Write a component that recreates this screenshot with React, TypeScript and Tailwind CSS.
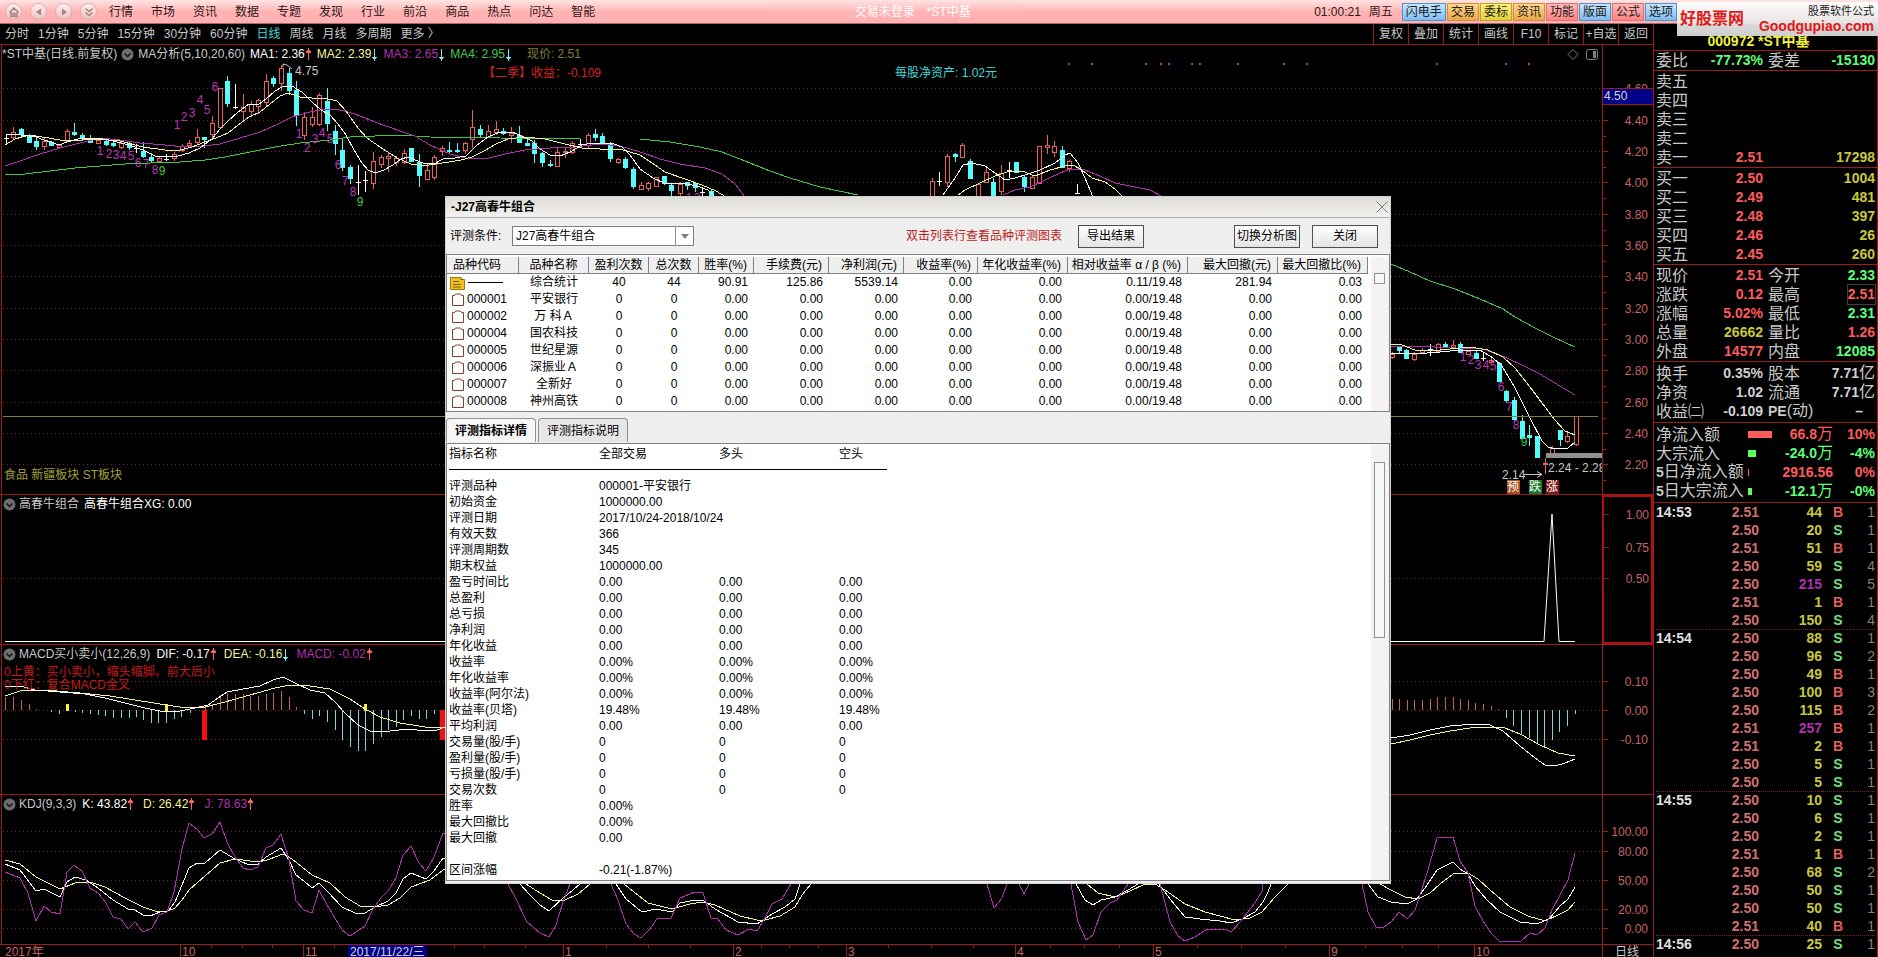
import type { ReactNode } from "react";

type Candle = [x: number, high: number, top: number, bottom: number, low: number, kind: "u" | "d" | "w"];
type Level = [label: string, y: number];

const MENU = ["行情", "市场", "资讯", "数据", "专题", "发现", "行业", "前沿", "商品", "热点", "问达", "智能"];
const PERIODS = ["分时", "1分钟", "5分钟", "15分钟", "30分钟", "60分钟", "日线", "周线", "月线", "多周期", "更多 〉"];
const TOOLS = ["复权", "叠加", "统计", "画线", "F10", "标记", "+自选", "返回"];

const BLUE = "border-[#4f94cc] from-[#c4e6ff] to-[#7dbcf0]";
const ORANGE = "border-[#d09040] from-[#ffd98a] to-[#e8a848]";
const YELLOW = "border-[#b8a820] from-[#fff27a] to-[#e0d030]";
const RED = "border-[#e07070] from-[#ffb8b8] to-[#ff8484]";
const SHORTCUTS = [
  { label: "闪电手", tone: BLUE },
  { label: "交易", tone: ORANGE },
  { label: "委标", tone: YELLOW },
  { label: "资讯", tone: ORANGE },
  { label: "功能", tone: RED },
  { label: "版面", tone: BLUE },
  { label: "公式", tone: RED },
  { label: "选项", tone: BLUE },
];

const CANDLES: Candle[] = [
  [6, 134, 138, 138, 143, "w"], [13, 127, 132, 137, 140, "u"], [21, 128, 129, 134, 137, "d"], [29, 134, 135, 142, 142, "d"],
  [36, 138, 141, 146, 150, "d"], [44, 138, 141, 146, 150, "u"], [51, 141, 142, 145, 145, "d"], [59, 144, 145, 147, 147, "u"],
  [67, 129, 131, 141, 142, "u"], [74, 123, 132, 134, 136, "d"], [82, 133, 135, 137, 141, "d"], [90, 135, 139, 142, 143, "d"],
  [98, 138, 140, 143, 144, "u"], [106, 139, 141, 144, 146, "d"], [113, 140, 143, 145, 147, "d"], [121, 142, 143, 147, 149, "u"],
  [129, 142, 143, 147, 150, "d"], [136, 144, 148, 148, 153, "w"], [143, 142, 151, 156, 158, "d"], [151, 153, 157, 160, 162, "d"],
  [159, 156, 158, 161, 163, "u"], [166, 154, 159, 159, 161, "w"], [174, 152, 154, 158, 161, "u"], [182, 144, 146, 150, 152, "u"],
  [189, 140, 143, 145, 146, "u"], [197, 129, 137, 142, 144, "u"], [204, 137, 137, 139, 148, "d"], [212, 116, 123, 134, 138, "u"],
  [220, 88, 88, 127, 129, "u"], [227, 76, 81, 103, 107, "d"], [235, 84, 107, 107, 109, "w"], [243, 94, 107, 111, 120, "u"],
  [251, 101, 104, 111, 117, "u"], [258, 99, 100, 106, 114, "u"], [266, 74, 81, 102, 107, "u"], [273, 76, 78, 83, 87, "d"],
  [281, 65, 68, 83, 91, "u"], [289, 68, 73, 90, 95, "d"], [296, 81, 90, 115, 126, "d"], [304, 112, 117, 135, 140, "u"],
  [312, 107, 117, 124, 127, "u"], [319, 93, 95, 124, 126, "u"], [327, 88, 101, 123, 131, "d"], [335, 125, 131, 143, 155, "d"],
  [342, 139, 150, 167, 171, "d"], [350, 165, 167, 178, 184, "d"], [358, 165, 182, 182, 195, "w"], [365, 171, 180, 180, 192, "w"],
  [373, 152, 161, 183, 189, "u"], [381, 155, 157, 164, 168, "u"], [388, 152, 156, 158, 172, "u"], [396, 156, 158, 162, 166, "u"],
  [404, 149, 153, 162, 164, "u"], [411, 148, 148, 161, 161, "d"], [419, 154, 162, 175, 187, "d"], [427, 163, 170, 179, 180, "u"],
  [434, 155, 157, 177, 180, "u"], [442, 146, 148, 151, 156, "u"], [449, 142, 150, 151, 153, "d"], [457, 143, 150, 151, 153, "d"],
  [465, 142, 143, 150, 154, "u"], [472, 110, 127, 139, 148, "u"], [480, 125, 129, 134, 137, "d"], [488, 125, 131, 137, 138, "u"],
  [496, 121, 129, 132, 135, "u"], [503, 128, 131, 133, 135, "d"], [511, 127, 133, 135, 143, "u"], [519, 126, 135, 142, 143, "d"],
  [527, 138, 143, 145, 146, "d"], [534, 140, 143, 153, 163, "d"], [542, 152, 153, 162, 167, "d"], [550, 160, 164, 165, 167, "d"],
  [557, 147, 152, 166, 167, "u"], [565, 147, 151, 152, 158, "u"], [572, 141, 143, 152, 154, "u"], [580, 139, 144, 144, 147, "w"],
  [588, 133, 135, 145, 148, "u"], [595, 129, 134, 137, 141, "d"], [602, 133, 136, 143, 144, "d"], [610, 142, 143, 158, 162, "d"],
  [618, 158, 159, 162, 164, "u"], [625, 157, 159, 167, 169, "d"], [633, 167, 169, 186, 189, "d"], [641, 182, 185, 189, 190, "u"],
  [648, 182, 183, 188, 191, "u"], [656, 177, 177, 186, 187, "u"], [664, 176, 176, 183, 185, "d"], [671, 183, 185, 190, 197, "d"],
  [680, 182, 184, 193, 196, "u"], [687, 182, 182, 185, 190, "d"], [695, 182, 183, 187, 192, "d"], [702, 187, 192, 192, 197, "w"],
  [711, 190, 191, 198, 198, "d"], [932, 178, 181, 198, 198, "u"], [939, 172, 181, 181, 186, "w"], [947, 154, 156, 182, 187, "u"],
  [955, 153, 154, 156, 162, "d"], [962, 143, 145, 157, 158, "u"], [970, 159, 161, 178, 178, "d"], [978, 183, 184, 198, 198, "u"],
  [986, 168, 172, 182, 183, "u"], [993, 178, 182, 195, 197, "d"], [1001, 165, 173, 191, 195, "u"], [1009, 162, 170, 170, 178, "w"],
  [1016, 162, 162, 172, 172, "d"], [1024, 176, 177, 186, 192, "d"], [1032, 175, 177, 188, 189, "u"], [1039, 146, 146, 183, 183, "u"],
  [1047, 135, 145, 147, 154, "u"], [1054, 141, 146, 152, 157, "u"], [1062, 146, 150, 167, 168, "d"], [1069, 160, 161, 168, 172, "u"],
  [1077, 184, 193, 193, 194, "w"], [1392, 352, 354, 357, 359, "u"], [1399, 346, 347, 350, 353, "d"], [1406, 349, 350, 358, 359, "d"],
  [1414, 352, 354, 359, 361, "u"], [1422, 348, 350, 352, 354, "u"], [1430, 344, 349, 349, 356, "w"], [1438, 343, 344, 351, 352, "u"],
  [1445, 342, 344, 347, 348, "d"], [1453, 340, 345, 347, 349, "u"], [1460, 342, 344, 352, 353, "d"], [1468, 350, 351, 354, 355, "u"],
  [1476, 351, 353, 358, 359, "d"], [1483, 353, 358, 358, 361, "w"], [1491, 358, 360, 362, 363, "u"], [1499, 362, 363, 381, 381, "d"],
  [1506, 390, 391, 400, 403, "d"], [1514, 397, 400, 419, 421, "d"], [1522, 415, 421, 438, 439, "d"], [1529, 425, 435, 437, 446, "d"],
  [1537, 436, 436, 457, 457, "d"], [1545, 458, 463, 464, 474, "u"], [1552, 446, 448, 453, 455, "u"], [1560, 430, 430, 439, 446, "d"],
  [1567, 432, 436, 441, 443, "u"], [1576, 416, 416, 444, 446, "u"],
];

const MA_LINES = [
  { color: "#44c844", points: "5,175 25,174 50,171 75,168 100,166 125,164 150,163 180,162 205,160 225,157 250,152 275,147 300,143 330,140 350,137 375,136 400,135 430,137 500,138 580,139 640,139 670,142 700,147 722,152 745,161 770,171 790,178 820,187 858,195" },
  { color: "#44c844", points: "1391,264 1410,272 1430,281 1455,289 1480,299 1503,309 1515,317 1535,328 1555,338 1575,347" },
  { color: "#b030b0", points: "5,166 20,161 40,154 60,148 80,143 100,138 120,140 140,143 165,145 185,147 205,146 220,144 240,138 260,132 278,124 292,117 310,112 325,109 340,110 355,114 375,122 400,131 415,136 430,145 450,154 465,158 485,159 505,154 525,150 550,148 575,147 600,144 620,146 640,152 660,159 680,164 705,168 722,174 735,184 745,197" },
  { color: "#b030b0", points: "1003,195 1015,190 1030,187 1045,180 1060,173 1070,169 1085,170 1100,176 1115,183 1135,187 1150,190 1163,197" },
  { color: "#b030b0", points: "1391,347 1420,346 1450,348 1480,348 1500,355 1520,364 1540,374 1560,386 1575,395" },
  { color: "#f4f49a", points: "5,145 15,139 29,135 49,138 65,141 82,140 98,139 120,141 143,147 165,150 180,150 192,147 205,142 216,138 228,133 238,125 249,117 260,112 270,104 280,96 288,93 300,97 312,98 324,98 337,101 346,111 358,128 367,138 380,147 397,158 411,164 423,166 436,164 449,162 461,160 472,157 484,151 496,144 508,139 524,137 545,139 565,144 582,148 600,149 620,149 640,155 655,165 665,172 685,179 702,185 716,191 726,197" },
  { color: "#f4f49a", points: "958,195 965,190 980,183 995,176 1010,171 1022,171 1035,176 1050,170 1065,166 1073,165 1082,170 1092,178 1105,182 1115,189 1122,196" },
  { color: "#f4f49a", points: "1391,344 1402,345 1415,350 1430,351 1450,349 1470,347 1488,350 1503,357 1515,368 1530,387 1545,407 1555,420 1565,431 1575,435" },
  { color: "#ffffff", points: "6,135 13,134 21,135 29,136 36,137 44,140 51,142 59,145 67,142 74,140 82,138 98,138 113,141 129,145 143,150 155,156 167,157 178,156 189,153 200,148 212,139 220,129 228,121 238,112 249,104 258,105 266,99 275,91 284,86 292,86 302,92 312,102 321,110 330,115 338,124 346,135 354,150 362,163 368,170 375,173 384,170 393,165 401,159 408,157 415,160 423,163 434,164 443,159 455,158 466,156 476,146 488,137 500,132 512,132 522,136 532,141 540,149 550,155 560,156 570,152 582,145 592,143 605,143 614,144 622,147 630,155 640,169 653,178 664,183 682,183 697,186 708,190 715,197" },
  { color: "#ffffff", points: "943,195 955,178 963,165 972,163 985,166 995,173 1005,180 1015,178 1028,174 1040,170 1055,163 1065,155 1070,153 1078,163 1085,178 1093,197" },
  { color: "#ffffff", points: "1391,353 1415,354 1440,352 1460,350 1480,350 1493,358 1502,366 1515,388 1530,418 1542,441 1548,447 1555,449 1568,448 1575,442" },
];

// nine-turn sequence counters, [digit, x, y]
const COUNTERS: [number, number, number][] = [
  [1, 100, 151], [2, 109, 154], [3, 116, 155], [4, 123, 156], [5, 131, 156], [6, 138, 163], [7, 146, 164], [8, 155, 170], [9, 162, 171],
  [1, 177, 125], [2, 184, 117], [3, 192, 113], [4, 200, 100], [5, 207, 110], [6, 215, 87],
  [1, 299, 134], [2, 307, 148], [3, 315, 139], [4, 322, 133], [5, 330, 139], [6, 338, 165], [7, 345, 181], [8, 353, 192], [9, 360, 202],
  [1, 689, 198], [2, 697, 198],
  [1, 1463, 357], [2, 1471, 360], [3, 1478, 365], [4, 1486, 365], [5, 1493, 366], [6, 1501, 387], [7, 1509, 407], [8, 1516, 425], [9, 1524, 442],
];

const SIGNAL_DOTS = [1069, 1092, 1146, 1161, 1169, 1192, 1200, 1238, 1284, 1307, 1437, 1506, 1529];

const PRICE_LEVELS: Level[] = [
  ["4.60", 88], ["4.40", 120], ["4.20", 151], ["4.00", 182], ["3.80", 214], ["3.60", 245], ["3.40", 276],
  ["3.20", 308], ["3.00", 339], ["2.80", 370], ["2.60", 402], ["2.40", 433], ["2.20", 464],
];

// histogram, [x, end y]
const MACD_BARS: [number, number][] = [
  [5, 697], [13, 697], [21, 700], [29, 704], [36, 709], [51, 712], [59, 714], [75, 712], [82, 713], [90, 714], [98, 715],
  [105, 716], [113, 718], [121, 718], [129, 718], [136, 717], [143, 720], [151, 723], [158, 723], [166, 723], [174, 719],
  [181, 717], [190, 713], [205, 706], [212, 704], [220, 695], [227, 693], [235, 694], [243, 694], [250, 696], [258, 696],
  [266, 694], [273, 693], [281, 691], [289, 697], [296, 707], [304, 714], [312, 719], [319, 716], [327, 722], [335, 730],
  [342, 740], [350, 747], [358, 751], [365, 751], [373, 744], [381, 737], [388, 730], [396, 727], [403, 720], [411, 716],
  [419, 719], [426, 719], [434, 714], [1392, 699], [1399, 699], [1407, 700], [1414, 700], [1422, 700], [1430, 699],
  [1437, 697], [1445, 697], [1453, 697], [1460, 699], [1468, 700], [1475, 703], [1483, 704], [1491, 706], [1498, 709],
  [1506, 718], [1513, 726], [1521, 735], [1529, 738], [1537, 743], [1544, 746], [1552, 740], [1559, 732], [1567, 726], [1575, 714],
];

const MACD_LINES = [
  { color: "#f4f49a", points: "5,696 20,691 45,690 80,693 110,696 135,700 160,704 180,707 205,707 225,702 250,695 275,688 290,685 310,686 330,689 350,699 365,709 380,717 400,723 425,727 445,728" },
  { color: "#ffffff", points: "5,687 20,686 35,690 60,692 85,694 105,698 125,703 145,708 160,711 180,711 195,708 208,705 218,698 227,692 243,689 260,686 273,680 283,677 295,683 310,690 325,693 335,702 345,713 358,725 370,731 390,731 408,729 425,731 437,730 445,727" },
  { color: "#f4f49a", points: "1391,744 1410,740 1430,735 1450,731 1470,728 1490,727 1505,728 1520,734 1540,745 1558,753 1575,756" },
  { color: "#ffffff", points: "1391,738 1410,735 1430,730 1450,726 1475,724 1490,725 1503,731 1520,746 1535,758 1545,765 1555,766 1565,763 1575,759" },
];

const KDJ_LINES = [
  { color: "#f4f49a", points: "5,860 20,864 36,877 50,884 60,889 75,883 90,882 105,887 125,898 143,907 155,911 168,911 175,908 182,900 189,890 205,876 220,863 235,859 250,861 260,862 270,859 283,854 292,859 312,875 330,883 345,897 360,906 375,907 388,905 400,898 411,887 430,880 443,870 450,866" },
  { color: "#f4f49a", points: "526,884 540,893 552,900 565,900 578,894 590,884" },
  { color: "#f4f49a", points: "624,884 634,892 648,903 672,909 690,904 703,902 715,905 740,916 757,920 765,920 780,916 795,907 802,895 811,884" },
  { color: "#f4f49a", points: "1087,884 1098,893 1115,897 1130,891 1145,884 1155,884 1165,890 1185,904 1205,912 1235,920 1250,918 1262,912 1275,897 1288,884" },
  { color: "#f4f49a", points: "1380,884 1391,890 1405,897 1418,899 1430,893 1440,884 1453,874 1468,873 1478,879 1490,890 1510,907 1528,916 1545,921 1560,914 1568,910 1575,902" },
  { color: "#ffffff", points: "5,864 20,870 36,891 44,889 60,897 67,882 75,877 86,880 98,888 113,900 128,909 135,910 143,915 150,916 160,912 168,911 175,902 182,885 189,868 197,863 205,863 220,850 235,859 247,864 258,864 266,857 281,848 289,860 296,875 304,881 312,888 319,883 327,891 342,907 355,913 365,913 375,907 388,901 396,893 403,879 411,873 426,879 434,871 443,858 450,858" },
  { color: "#ffffff", points: "520,884 530,895 540,905 549,911 563,898 573,890 580,884" },
  { color: "#ffffff", points: "616,884 626,899 642,912 656,909 672,912 680,903 695,900 703,900 715,909 738,922 757,924 772,914 785,907 795,899 800,884" },
  { color: "#ffffff", points: "1076,884 1085,900 1093,905 1101,900 1115,897 1128,890 1138,884" },
  { color: "#ffffff", points: "1159,884 1170,899 1185,917 1200,919 1220,921 1231,923 1242,919 1255,912 1263,902 1268,892 1271,884" },
  { color: "#ffffff", points: "1368,884 1378,897 1391,902 1407,904 1417,899 1427,885 1437,870 1453,862 1460,869 1468,874 1475,886 1487,900 1500,912 1520,922 1537,924 1549,919 1560,906 1568,899 1575,887" },
  { color: "#b030b0", points: "5,872 20,878 28,893 36,921 44,906 51,912 60,914 67,872 74,865 82,871 90,888 98,893 106,903 113,917 121,919 128,929 135,922 143,932 152,928 159,915 167,912 174,892 182,849 189,823 197,829 204,838 212,834 220,822 227,842 235,857 243,868 250,870 258,867 266,848 273,845 281,834 289,860 296,901 304,910 312,913 319,890 327,905 335,918 342,930 350,936 365,926 373,909 381,898 388,891 396,878 403,855 411,846 419,863 426,871 434,857 443,833 450,835" },
  { color: "#b030b0", points: "508,884 515,897 527,922 540,933 549,937 556,925 563,902 570,884" },
  { color: "#b030b0", points: "611,884 618,900 626,924 634,934 641,938 649,930 657,919 671,918 680,898 695,892 703,893 711,918 718,919 726,930 738,935 749,929 757,931 765,918 772,904 782,899 791,884" },
  { color: "#b030b0", points: "987,884 994,908 1002,898 1007,884" },
  { color: "#b030b0", points: "1019,884 1024,894 1029,884" },
  { color: "#b030b0", points: "1071,884 1078,922 1086,940 1093,935 1101,912 1110,903 1117,900 1128,884" },
  { color: "#b030b0", points: "1160,884 1170,922 1178,936 1185,941 1195,937 1207,929 1225,929 1231,932 1240,922 1255,903 1262,891 1263,884" },
  { color: "#b030b0", points: "1362,884 1368,912 1376,927 1384,927 1391,922 1399,912 1407,919 1415,910 1420,895 1428,870 1437,838 1453,837 1460,861 1468,873 1475,906 1483,921 1491,933 1499,941 1521,941 1530,933 1537,935 1545,928 1552,910 1560,895 1568,880 1575,853" },
];

const MONTHS: [string, number][] = [
  ["10", 180], ["11", 303], ["1", 563], ["2", 733], ["3", 846], ["4", 1015], ["5", 1153], ["9", 1329], ["10", 1474],
];
const WEEK_TICKS = [211, 242, 272, 334, 358, 454, 484, 525, 606, 648, 690, 761, 789, 818, 888, 931, 973, 1050, 1084, 1119, 1197, 1241, 1285, 1365, 1402, 1438];

const COLUMNS = [
  { title: "品种代码", width: "w-[72px]" },
  { title: "品种名称", width: "w-[70px]" },
  { title: "盈利次数", width: "w-[60px]" },
  { title: "总次数", width: "w-[50px]" },
  { title: "胜率(%)", width: "w-[55px]" },
  { title: "手续费(元)", width: "w-[75px]" },
  { title: "净利润(元)", width: "w-[75px]" },
  { title: "收益率(%)", width: "w-[74px]" },
  { title: "年化收益率(%)", width: "w-[90px]" },
  { title: "相对收益率 α / β (%)", width: "w-[120px]" },
  { title: "最大回撤(元)", width: "w-[90px]" },
  { title: "最大回撤比(%)", width: "w-[90px]" },
];

const zeros = (code: string, name: string) => [code, name, "0", "0", "0.00", "0.00", "0.00", "0.00", "0.00", "0.00/19.48", "0.00", "0.00"];
const RESULTS = [
  ["", "综合统计", "40", "44", "90.91", "125.86", "5539.14", "0.00", "0.00", "0.11/19.48", "281.94", "0.03"],
  zeros("000001", "平安银行"),
  zeros("000002", "万 科Ａ"),
  zeros("000004", "国农科技"),
  zeros("000005", "世纪星源"),
  zeros("000006", "深振业Ａ"),
  zeros("000007", "全新好"),
  zeros("000008", "神州高铁"),
];

const DETAILS: string[][] = [
  ["评测品种", "000001-平安银行"],
  ["初始资金", "1000000.00"],
  ["评测日期", "2017/10/24-2018/10/24"],
  ["有效天数", "366"],
  ["评测周期数", "345"],
  ["期末权益", "1000000.00"],
  ["盈亏时间比", "0.00", "0.00", "0.00"],
  ["总盈利", "0.00", "0.00", "0.00"],
  ["总亏损", "0.00", "0.00", "0.00"],
  ["净利润", "0.00", "0.00", "0.00"],
  ["年化收益", "0.00", "0.00", "0.00"],
  ["收益率", "0.00%", "0.00%", "0.00%"],
  ["年化收益率", "0.00%", "0.00%", "0.00%"],
  ["收益率(阿尔法)", "0.00%", "0.00%", "0.00%"],
  ["收益率(贝塔)", "19.48%", "19.48%", "19.48%"],
  ["平均利润", "0.00", "0.00", "0.00"],
  ["交易量(股/手)", "0", "0", "0"],
  ["盈利量(股/手)", "0", "0", "0"],
  ["亏损量(股/手)", "0", "0", "0"],
  ["交易次数", "0", "0", "0"],
  ["胜率", "0.00%"],
  ["最大回撤比", "0.00%"],
  ["最大回撤", "0.00"],
  [],
  ["区间涨幅", "-0.21(-1.87%)"],
];

const UP = "text-[#ff5c5c]";
const DOWN = "text-[#5cff7a]";
const VOL = "text-[#c8c83c]";
const PLAIN = "text-[#d0d0d0]";

const ASKS = [["卖五", "", ""], ["卖四", "", ""], ["卖三", "", ""], ["卖二", "", ""], ["卖一", "2.51", "17298"]];
const BIDS = [["买一", "2.50", "1004"], ["买二", "2.49", "481"], ["买三", "2.48", "397"], ["买四", "2.46", "26"], ["买五", "2.45", "260"]];

type Trade = [time: string, price: string, volume: string, side: "B" | "S", count: string];
const TRADES: Trade[] = [
  ["14:53", "2.51", "44", "B", "1"],
  ["", "2.50", "20", "S", "1"],
  ["", "2.51", "51", "B", "1"],
  ["", "2.50", "59", "S", "4"],
  ["", "2.50", "215", "S", "5"],
  ["", "2.51", "1", "B", "1"],
  ["", "2.50", "150", "S", "4"],
  ["14:54", "2.50", "88", "S", "1"],
  ["", "2.50", "96", "S", "2"],
  ["", "2.50", "49", "B", "1"],
  ["", "2.50", "100", "B", "3"],
  ["", "2.50", "115", "B", "2"],
  ["", "2.51", "257", "B", "1"],
  ["", "2.51", "2", "B", "1"],
  ["", "2.50", "5", "S", "1"],
  ["", "2.50", "5", "S", "1"],
  ["14:55", "2.50", "10", "S", "1"],
  ["", "2.50", "6", "S", "1"],
  ["", "2.50", "2", "S", "1"],
  ["", "2.51", "1", "B", "1"],
  ["", "2.50", "68", "S", "2"],
  ["", "2.50", "50", "S", "1"],
  ["", "2.50", "50", "S", "1"],
  ["", "2.51", "40", "B", "1"],
  ["14:56", "2.50", "25", "S", "1"],
];

function NavIcon({ label, children }: { label: string; children: ReactNode }) {
  return (
    <button aria-label={label} className="flex size-[17px] items-center justify-center rounded-full border border-[#e8a8a8] bg-gradient-to-b from-[#fff0f0] to-[#e8c4c4]">
      <svg viewBox="0 0 12 12" className="size-3" fill="none" stroke="#b08080" strokeWidth="1.5">
        {children}
      </svg>
    </button>
  );
}

function TitleBar() {
  return (
    <header className="flex h-6 items-center justify-between border-b border-[#a06868] bg-gradient-to-b from-[#ffe4e4] via-[#ffb4b4] to-[#ffb0b0]">
      <div className="flex items-center pl-[5px]">
        <div className="flex gap-2">
          <NavIcon label="首页"><path d="M1.500 6.500 6 2l4.500 4.500M3 6v4.500h2V7.500h2v3h2V6" /></NavIcon>
          <NavIcon label="后退"><path d="M8 2.500v7L3 6z" fill="#b08080" stroke="none" /></NavIcon>
          <NavIcon label="前进"><path d="M4 2.500v7L9 6z" fill="#b08080" stroke="none" /></NavIcon>
          <NavIcon label="更多"><path d="m2.500 2.500 3.500 3 3.500-3M2.500 6.500l3.500 3 3.500-3" /></NavIcon>
        </div>
        <nav className="flex gap-[18px] pl-3 text-[#301818]">
          {MENU.map((m) => (
            <button key={m}>{m}</button>
          ))}
        </nav>
      </div>
      <div className="flex gap-3 pr-[84px] text-white">
        <span>交易未登录</span>
        <span>*ST中基</span>
      </div>
      <div className="flex items-center pr-[201px]">
        <span className="pr-2 text-[#301818]">01:00:21</span>
        <span className="pr-[9px] text-[#301818]">周五</span>
        <div className="flex gap-px">
          {SHORTCUTS.map((s) => (
            <button key={s.label} className={`h-[18px] border bg-gradient-to-b px-[3px] leading-4 text-[#202020] ${s.tone}`}>
              {s.label}
            </button>
          ))}
        </div>
      </div>
    </header>
  );
}

function Watermark() {
  return (
    <div className="absolute top-0.5 right-0 flex h-[34px] w-[201px] items-center bg-gradient-to-b from-white/95 to-[#d8d8d8]/95 pl-[3px] whitespace-nowrap text-[#e01818]">
      <span className="text-base leading-8 font-bold">好股票网</span>
      <div className="flex flex-1 flex-col items-end pr-1">
        <span className="text-[11px] leading-[14px] text-[#202020]">股票软件公式</span>
        <a href="#" className="text-sm leading-4 font-bold">Goodgupiao.com</a>
      </div>
    </div>
  );
}

function Toolbar() {
  return (
    <div className="flex h-[21px] items-stretch justify-between border-b border-[#9c1c1c] text-[#c8c8c8]">
      <div className="flex items-center gap-[9px] pl-[5px]">
        {PERIODS.map((p) => (
          <button key={p} className={p === "日线" ? "text-[#40d8d8]" : ""}>{p}</button>
        ))}
      </div>
      <div className="flex">
        {TOOLS.map((t) => (
          <button key={t} className="w-[35px] border-l border-[#9c1c1c] text-center whitespace-nowrap">{t}</button>
        ))}
      </div>
    </div>
  );
}

function Arrow({ down }: { down?: boolean }) {
  return (
    <svg width="6" height="13" className="inline-block shrink-0" fill={down ? "#70f0f0" : "#ff6060"} stroke={down ? "#70f0f0" : "#ff6060"} shapeRendering="crispEdges">
      <path d={down ? "M3.500 1v10M1.500 9h4l-2 3z" : "M3.500 12V2M1.500 4h4l-2-3z"} />
    </svg>
  );
}

function Fold() {
  return (
    <button aria-label="折叠" className="shrink-0">
      <svg width="13" height="13" fill="none">
        <circle cx="6.500" cy="6.500" r="6" fill="#6e6e6e" />
        <path d="m3.500 5.500 3 3 3-3" stroke="#141414" strokeWidth="1.500" />
      </svg>
    </button>
  );
}

function Lines({ items }: { items: { color: string; points: string }[] }) {
  return (
    <>
      {items.map((l) => (
        <polyline key={l.points} points={l.points} fill="none" stroke={l.color} shapeRendering="crispEdges" />
      ))}
    </>
  );
}

type PaneProps = {
  top: number;
  height: string;
  levels: Level[];
  grid: number[];
  header: ReactNode;
  children: ReactNode;
  axis?: ReactNode;
  active?: boolean;
};

// All drawing inside a pane uses window y values, shifted up by the pane's own top.
function Pane({ top, height, levels, grid, header, children, axis, active }: PaneProps) {
  return (
    <section className={`flex border-b border-[#9c1c1c] ${height}`}>
      <div className="relative min-w-0 flex-1 overflow-hidden">
        <svg className="absolute inset-0 size-full">
          <g transform={`translate(0 ${-top})`}>
            <line x1="1.5" x2="1.5" y1={top} y2="957" stroke="#9c1c1c" />
            {grid.map((y) => (
              <line key={y} x1="3" x2="100%" y1={y + 0.5} y2={y + 0.5} stroke="#6e2626" strokeDasharray="1 3" />
            ))}
            {children}
          </g>
        </svg>
        <div className="relative flex h-[18px] items-center whitespace-pre">{header}</div>
      </div>
      <div className={`relative w-[51px] shrink-0 ${active ? "border-2 border-[#b01010]" : "border-l border-[#9c1c1c]"}`}>
        <svg className="absolute inset-0 size-full">
          <g transform={`translate(0 ${active ? -top - 2 : -top})`}>
            {levels.map(([label, y]) => (
              <g key={label}>
                <line x1="0" x2="5" y1={y + 0.5} y2={y + 0.5} stroke="#9c1c1c" />
                <text x="45" y={y + 5} textAnchor="end" fill="#c86464">{label}</text>
              </g>
            ))}
            {axis}
          </g>
        </svg>
      </div>
    </section>
  );
}

function CandleShape({ candle }: { candle: Candle }) {
  const [x, high, top, bottom, low, kind] = candle;
  if (kind === "w") {
    return <path d={`M${x + 0.5} ${high}V${low}M${x - 2} ${top + 0.5}h5`} stroke="#ffffff" />;
  }
  const color = kind === "u" ? "#e86060" : "#54fcfc";
  return (
    <g stroke={color}>
      <line x1={x + 0.5} x2={x + 0.5} y1={high} y2={low} />
      <rect x={x - 1.5} y={top + 0.5} width="4" height={Math.max(bottom - top, 1)} fill={kind === "u" ? "#000000" : color} />
    </g>
  );
}

function Badge({ x, fill, text }: { x: number; fill: string; text: string }) {
  return (
    <g>
      <rect x={x} y="480" width="13" height="14" fill={fill} />
      <text x={x} y="491" fill="#ffffff">{text}</text>
    </g>
  );
}

function PricePane() {
  return (
    <Pane
      top={45}
      height="h-[450px]"
      levels={PRICE_LEVELS}
      grid={PRICE_LEVELS.map(([, y]) => y)}
      header={
        <>
          <span className="pl-0.5 text-[#c8c8c8]">*ST中基(日线.前复权)</span>
          <span className="flex px-1"><Fold /></span>
          <span className="pr-[5px] text-[#c8c8c8]">MA分析(5,10,20,60)</span>
          <span className="text-white">MA1: 2.36</span><Arrow />
          <span className="pl-1.5 text-[#f4f49a]">MA2: 2.39</span><Arrow down />
          <span className="pl-1.5 text-[#b030b0]">MA3: 2.65</span><Arrow down />
          <span className="pl-1.5 text-[#44c844]">MA4: 2.95</span><Arrow down />
          <span className="pl-4 text-[#80803c]">现价: 2.51</span>
          <span className="ml-auto flex items-center gap-2">
            <svg width="36" height="13" fill="none" stroke="#808080">
              <path d="m7 1.500 5 5-5 5-5-5z" />
              <rect x="20.500" y="1.500" width="11" height="10" rx="2" />
              <rect x="27" y="3" width="3" height="7" fill="#808080" stroke="none" />
            </svg>
          </span>
        </>
      }
      axis={
        <>
          {PRICE_LEVELS.map(([, y]) => (
            <line key={y} x1="0" x2="3" y1={y + 16.5} y2={y + 16.5} stroke="#9c1c1c" />
          ))}
          <rect x="0" y="88" width="51" height="16" fill="#000088" />
          <path d="M0 88.500h51M0 104.500h51" stroke="#9c1c1c" />
          <text x="1" y="100" fill="#d8d8d8">4.50</text>
        </>
      }
    >
      <g shapeRendering="crispEdges">
        {CANDLES.map((c) => (
          <CandleShape key={c[0]} candle={c} />
        ))}
      </g>
      <Lines items={MA_LINES} />
      <g textAnchor="middle">
        {COUNTERS.map(([n, x, y]) => (
          <text key={`${x}-${y}`} x={x} y={y + 4} fill={n === 9 ? "#44c844" : "#b838b8"}>{n}</text>
        ))}
      </g>
      {SIGNAL_DOTS.map((x) => (
        <rect key={x} x={x - 1} y="63" width="2" height="2" fill="#b030b0" />
      ))}
      <path d="M283 67v-3l4 1 5 4" fill="none" stroke="#c8c8c8" />
      <text x="295" y="75" fill="#c8c8c8">4.75</text>
      <text x="483" y="77" fill="#d82020">【二季】收益：-0.109</text>
      <text x="895" y="77" fill="#40d8d8">每股净资产: 1.02元</text>
      <line x1="3" x2="1598" y1="416.5" y2="416.5" stroke="#80803c" />
      <rect x="1546" y="453" width="60" height="5" fill="#909090" />
      <text x="1548" y="472" fill="#c8c8c8">2.24 - 2.28</text>
      <text x="1502" y="479" fill="#c8c8c8">2.14</text>
      <path d="M1524 474.500h18m-5-3 5 3-5 3" fill="none" stroke="#c8c8c8" />
      <Badge x={1507} fill="#a85020" text="预" />
      <Badge x={1529} fill="#187828" text="跌" />
      <Badge x={1546} fill="#801818" text="涨" />
      <text x="4" y="479" fill="#a0a038">食品 新疆板块 ST板块</text>
    </Pane>
  );
}

function SignalPane() {
  return (
    <Pane
      top={495}
      height="h-[150px]"
      active
      levels={[["1.00", 514], ["0.75", 547], ["0.50", 578]]}
      grid={[578]}
      header={
        <>
          <span className="flex px-[3px]"><Fold /></span>
          <span className="text-[#c8c8c8]">高春牛组合</span>
          <span className="pl-[5px] text-white">高春牛组合XG: 0.00</span>
        </>
      }
    >
      <polyline points="5,641.5 1544,641.5 1552,514 1559,641.5 1575,641.5" fill="none" stroke="#ffffff" />
    </Pane>
  );
}

function MacdPane() {
  return (
    <Pane
      top={645}
      height="h-[150px]"
      levels={[["0.10", 681], ["0.00", 710], ["-0.10", 739]]}
      grid={[681, 710, 739]}
      header={
        <>
          <span className="flex px-[3px]"><Fold /></span>
          <span className="text-[#c8c8c8]">MACD买小卖小(12,26,9)</span>
          <span className="pl-[6px] text-white">DIF: -0.17</span><Arrow />
          <span className="pl-2 text-[#f4f49a]">DEA: -0.16</span><Arrow down />
          <span className="pl-2 text-[#b030b0]">MACD: -0.02</span><Arrow />
        </>
      }
    >
      <g shapeRendering="crispEdges">
        {MACD_BARS.map(([x, y]) => (
          <line key={x} x1={x + 0.5} x2={x + 0.5} y1="710" y2={y} stroke={y < 710 ? "#c06060" : "#78d8d8"} />
        ))}
        {[66, 165, 364].map((x) => (
          <rect key={x} x={x} y="704" width="3" height="7" fill="#f8f030" />
        ))}
        <rect x="202" y="710" width="5" height="30" fill="#f01010" />
        <rect x="440" y="710" width="5" height="30" fill="#f01010" />
      </g>
      <Lines items={MACD_LINES} />
      <text x="4" y="676" fill="#c81818">0上黄：买小卖小，缩头缩脚。前大后小</text>
      <text x="4" y="689" fill="#c81818">0下红：复合MACD金叉</text>
    </Pane>
  );
}

function KdjPane() {
  return (
    <Pane
      top={795}
      height="h-[150px]"
      levels={[["100.00", 831], ["80.00", 851], ["50.00", 880], ["20.00", 909], ["0.00", 928]]}
      grid={[831, 851, 880, 909, 928]}
      header={
        <>
          <span className="flex px-[3px]"><Fold /></span>
          <span className="text-[#c8c8c8]">KDJ(9,3,3)</span>
          <span className="pl-[6px] text-white">K: 43.82</span><Arrow />
          <span className="pl-2.5 text-[#f4f49a]">D: 26.42</span><Arrow />
          <span className="pl-2.5 text-[#b030b0]">J: 78.63</span><Arrow />
        </>
      }
    >
      <Lines items={KDJ_LINES} />
    </Pane>
  );
}

function DateAxis() {
  return (
    <div className="flex h-3">
      <svg className="h-full min-w-0 flex-1" fill="#c86464">
        <text x="5" y="11">2017年</text>
        {WEEK_TICKS.map((x) => (
          <line key={x} x1={x + 0.5} x2={x + 0.5} y1="0" y2="3" stroke="#9c1c1c" />
        ))}
        {MONTHS.map(([m, x]) => (
          <g key={x}>
            <line x1={x + 0.5} x2={x + 0.5} y1="0" y2="12" stroke="#9c1c1c" />
            <text x={x + 2} y="11">{m}</text>
          </g>
        ))}
        <rect x="348" y="0" width="79" height="12" fill="#000088" />
        <text x="350" y="11" fill="#d8d8d8">2017/11/22/三</text>
      </svg>
      <svg className="h-full w-[51px] border-l border-[#9c1c1c]" fill="#c8c8c8">
        <text x="12" y="11">日线</text>
      </svg>
    </div>
  );
}

function ReportHead() {
  return (
    <thead>
      <tr className="h-[17px] bg-[#efefef]">
        {COLUMNS.map((c, i) => (
          <th
            key={c.title}
            className={`border-r border-b border-[#808080] p-0 leading-4 font-normal ${c.width} ${i === 0 ? "pl-1.5 text-left" : i < 4 ? "text-center" : "pr-[6px] text-right"}`}
          >
            {c.title}
          </th>
        ))}
      </tr>
    </thead>
  );
}

function ReportDialog() {
  return (
    <div role="dialog" aria-label="-J27高春牛组合" className="absolute top-[196px] left-[445px] w-[946px] border border-[#d0d0d0] bg-[#efefef] pb-0.5 text-black">
      <div className="flex h-[21px] items-center justify-between border-b border-[#b0b0b0] bg-gradient-to-b from-[#dedcd6] to-[#f2f2f0] pr-0.5 pl-[5px]">
        <h2 className="font-bold">-J27高春牛组合</h2>
        <button aria-label="关闭窗口">
          <svg width="12" height="12" stroke="#808080"><path d="m.5.5 11 11m0-11-11 11" /></svg>
        </button>
      </div>
      <div className="flex h-9 items-center pr-3 pl-1">
        <label htmlFor="condition" className="w-[62px]">评测条件:</label>
        <div className="relative">
          <select id="condition" className="h-5 w-[182px] appearance-none border border-[#808080] bg-white pl-[3px] leading-4">
            <option>J27高春牛组合</option>
          </select>
          <span className="pointer-events-none absolute inset-y-0 right-0 flex w-[19px] items-center justify-center border-l border-[#909090]">
            <svg width="8" height="5" fill="#808080"><path d="M0 0h8L4 5z" /></svg>
          </span>
        </div>
        <p className="ml-auto text-[#b81c1c]">双击列表行查看品种评测图表</p>
        <button className="ml-4 h-[23px] w-[66px] border border-[#505050] bg-gradient-to-b from-white to-[#e4e4e4]">导出结果</button>
        <button className="ml-[90px] h-[23px] w-[66px] border border-[#505050] bg-gradient-to-b from-white to-[#e4e4e4]">切换分析图</button>
        <button className="ml-3 h-[23px] w-[66px] border border-[#505050] bg-gradient-to-b from-white to-[#e4e4e4]">关闭</button>
      </div>
      <div className="flex h-[158px] justify-between border border-[#808080] bg-white pt-0.5">
        <div>
          <table className="w-[921px] table-fixed border-separate border-spacing-0 whitespace-nowrap">
            <ReportHead />
            <tbody>
              {RESULTS.map((row, r) => (
                <tr key={row[1]} className="h-[17px]">
                  {row.map((cell, i) => (
                    <td key={i} className={`p-0 leading-[17px] ${i === 0 ? "" : i < 4 ? "text-center" : "pr-[6px] text-right"}`}>
                      {i > 0 ? cell : r === 0 ? (
                        <span className="flex items-center gap-[3px] pl-[3px]">
                          <svg width="15" height="14">
                            <path d="M.5 1.500h9l1 2h4v10H.5z" fill="#f0c020" stroke="#a07808" />
                            <path d="M3 5.500h6M3 8.500h8M3 11h8M10 1l3 3" stroke="#806000" />
                          </svg>
                          <span className="h-px w-[35px] bg-black" />
                        </span>
                      ) : (
                        <span className="flex items-center gap-[3px] pl-[5px]">
                          <svg width="12" height="13" fill="none" stroke="#804030"><path d="M.5 2.500h2l1-1.500h5l1 1.500h2v10H.5z" /></svg>
                          {cell}
                        </span>
                      )}
                    </td>
                  ))}
                </tr>
              ))}
            </tbody>
          </table>
        </div>
        <div className="w-[18px] bg-[#f4f2f2] pt-4 pl-[3px]">
          <div className="size-[11px] border border-[#909090] bg-[#f8f8f8]" />
        </div>
      </div>
      <div role="tablist" className="flex h-[31px] items-end gap-0.5 pb-px">
        <button role="tab" aria-selected="true" className="h-6 w-[90px] rounded-t border border-b-0 border-[#909090] bg-[#f6f6f6] font-bold">评测指标详情</button>
        <button role="tab" aria-selected="false" className="h-6 w-[90px] rounded-t border border-b-0 border-[#909090] bg-[#e6e6e6]">评测指标说明</button>
      </div>
      <div className="flex justify-between border border-[#808080] bg-white">
        <table className="mb-0.5 ml-0.5 w-[438px] table-fixed border-separate border-spacing-0 whitespace-nowrap">
          <thead>
            <tr className="text-left">
              <th className="w-[150px] border-b border-black p-0 pb-[5px] leading-5 font-normal">指标名称</th>
              <th className="w-[120px] border-b border-black p-0 pb-[5px] leading-5 font-normal">全部交易</th>
              <th className="w-[120px] border-b border-black p-0 pb-[5px] leading-5 font-normal">多头</th>
              <th className="border-b border-black p-0 pb-[5px] leading-5 font-normal">空头</th>
            </tr>
          </thead>
          <tbody>
            <tr className="h-2"><td colSpan={4} /></tr>
            {DETAILS.map((row, r) => (
              <tr key={r} className="h-4">
                {row.map((cell, i) => (
                  <td key={i} className="p-0 leading-4">{cell}</td>
                ))}
              </tr>
            ))}
          </tbody>
        </table>
        <div className="w-[18px] bg-[#f4f2f2] pt-[18px] pl-[3px]">
          <div className="h-[176px] w-[11px] border border-[#909090] bg-[#f8f8f8]" />
        </div>
      </div>
    </div>
  );
}

function Num({ value, unit, tone }: { value: string; unit?: string; tone: string }) {
  return (
    <span className={`text-right text-sm leading-[19px] font-bold ${tone}`}>
      {value}
      {unit && <span className="text-base leading-[19px] font-normal">{unit}</span>}
    </span>
  );
}

function BookRows({ rows }: { rows: string[][] }) {
  return (
    <div className="border-b border-[#9c1c1c] pt-px">
      {rows.map(([label, price, volume]) => (
        <div key={label} className="grid h-[19px] grid-cols-[52px_55px_1fr] items-center">
          <span>{label}</span>
          <Num value={price} tone={UP} />
          <Num value={volume} tone={VOL} />
        </div>
      ))}
    </div>
  );
}

type QuoteProps = { label: string; value: string; tone: string; label2: ReactNode; value2: string; tone2: string; unit?: string; boxed?: boolean };

function Quote({ label, value, tone, label2, value2, tone2, unit, boxed }: QuoteProps) {
  return (
    <div className="grid h-[19px] grid-cols-[52px_55px_37px_1fr] items-center whitespace-nowrap">
      <span>{label}</span>
      <Num value={value} tone={tone} />
      <span className="pl-[5px]">{label2}</span>
      <Num value={value2} unit={unit} tone={boxed ? `${tone2} justify-self-end outline outline-[#404040]` : tone2} />
    </div>
  );
}

function Flow({ label, bar, value, unit, pct, tone }: { label: ReactNode; bar: string; value: string; unit?: string; pct: string; tone: string }) {
  return (
    <div className="grid h-[19px] grid-cols-[92px_24px_61px_1fr] items-center whitespace-nowrap">
      <span>{label}</span>
      <span className={`h-[7px] ${bar}`} />
      <Num value={value} unit={unit} tone={tone} />
      <Num value={pct} tone={tone} />
    </div>
  );
}

function Sidebar() {
  return (
    <aside className="w-[225px] shrink-0 border-x border-[#9c1c1c] text-base leading-[19px] text-[#c8c8c8] *:pr-0.5 *:pl-0.5">
      <h1 className="flex h-[27px] items-end justify-center border-b border-[#9c1c1c] pr-4! text-sm leading-[17px] font-bold text-[#f0f03c]">
        000972 *ST中基
      </h1>
      <div className="grid h-5 grid-cols-[52px_55px_37px_1fr] items-center border-b border-[#9c1c1c]">
        <span>委比</span>
        <Num value="-77.73%" tone={DOWN} />
        <span className="pl-[5px]">委差</span>
        <Num value="-15130" tone={DOWN} />
      </div>
      <BookRows rows={ASKS} />
      <BookRows rows={BIDS} />
      <div className="border-b border-[#9c1c1c] pt-px">
        <Quote label="现价" value="2.51" tone={UP} label2="今开" value2="2.33" tone2={DOWN} />
        <Quote label="涨跌" value="0.12" tone={UP} label2="最高" value2="2.51" tone2={UP} boxed />
        <Quote label="涨幅" value="5.02%" tone={UP} label2="最低" value2="2.31" tone2={DOWN} />
        <Quote label="总量" value="26662" tone={VOL} label2="量比" value2="1.26" tone2={UP} />
        <Quote label="外盘" value="14577" tone={UP} label2="内盘" value2="12085" tone2={DOWN} />
      </div>
      <div className="border-b border-[#9c1c1c] pt-px pb-0.5">
        <Quote label="换手" value="0.35%" tone={PLAIN} label2="股本" value2="7.71" unit="亿" tone2={PLAIN} />
        <Quote label="净资" value="1.02" tone={PLAIN} label2="流通" value2="7.71" unit="亿" tone2={PLAIN} />
        <Quote label="收益㈡" value="-0.109" tone={PLAIN} label2={<><b className="text-sm">PE</b>(动)</>} value2="–" tone2={`${PLAIN} pr-3`} />
      </div>
      <div className="border-b border-[#9c1c1c] pt-px pb-0.5">
        <Flow label="净流入额" bar="w-6 bg-[#ff5c5c]" value="66.8" unit="万" pct="10%" tone={UP} />
        <Flow label="大宗流入" bar="w-2 bg-[#5cff5c]" value="-24.0" unit="万" pct="-4%" tone={DOWN} />
        <Flow label={<><b className="text-sm">5</b>日净流入额</>} bar="w-px bg-[#ff5c5c]" value="2916.56" pct="0%" tone={UP} />
        <Flow label={<><b className="text-sm">5</b>日大宗流入</>} bar="w-1 bg-[#5cff5c]" value="-12.1" unit="万" pct="-0%" tone={DOWN} />
      </div>
      <table className="w-full table-fixed border-separate border-spacing-0 text-sm font-bold">
        <colgroup>
          <col className="w-[54px]" />
          <col className="w-[49px]" />
          <col className="w-[63px]" />
          <col className="w-8" />
          <col />
        </colgroup>
        <tbody>
          {TRADES.map(([time, price, volume, side, count], i) => (
            <tr key={i} className={`h-[18px] leading-[17px] ${time && i > 0 ? "*:border-t *:border-dotted *:border-[#802020]" : ""}`}>
              <td className="p-0 text-[#e0e0e0]">{time}</td>
              <td className="p-0 text-right text-[#d07070]">{price}</td>
              <td className={`p-0 text-right ${Number(volume) > 200 ? "text-[#b030b0]" : VOL}`}>{volume}</td>
              <td className={`p-0 text-center ${side === "B" ? "text-[#e85c5c]" : "text-[#70e080]"}`}>{side}</td>
              <td className="p-0 text-right font-normal text-[#808080]">{count}</td>
            </tr>
          ))}
        </tbody>
      </table>
    </aside>
  );
}

export default function App() {
  return (
    <div className="relative min-h-screen overflow-hidden bg-black font-['Liberation_Sans','Noto_Sans_CJK_SC',sans-serif] text-xs leading-4">
      <TitleBar />
      <div className="flex">
        <main className="min-w-0 flex-1">
          <Toolbar />
          <PricePane />
          <SignalPane />
          <MacdPane />
          <KdjPane />
          <DateAxis />
        </main>
        <Sidebar />
      </div>
      <Watermark />
      <ReportDialog />
    </div>
  );
}
